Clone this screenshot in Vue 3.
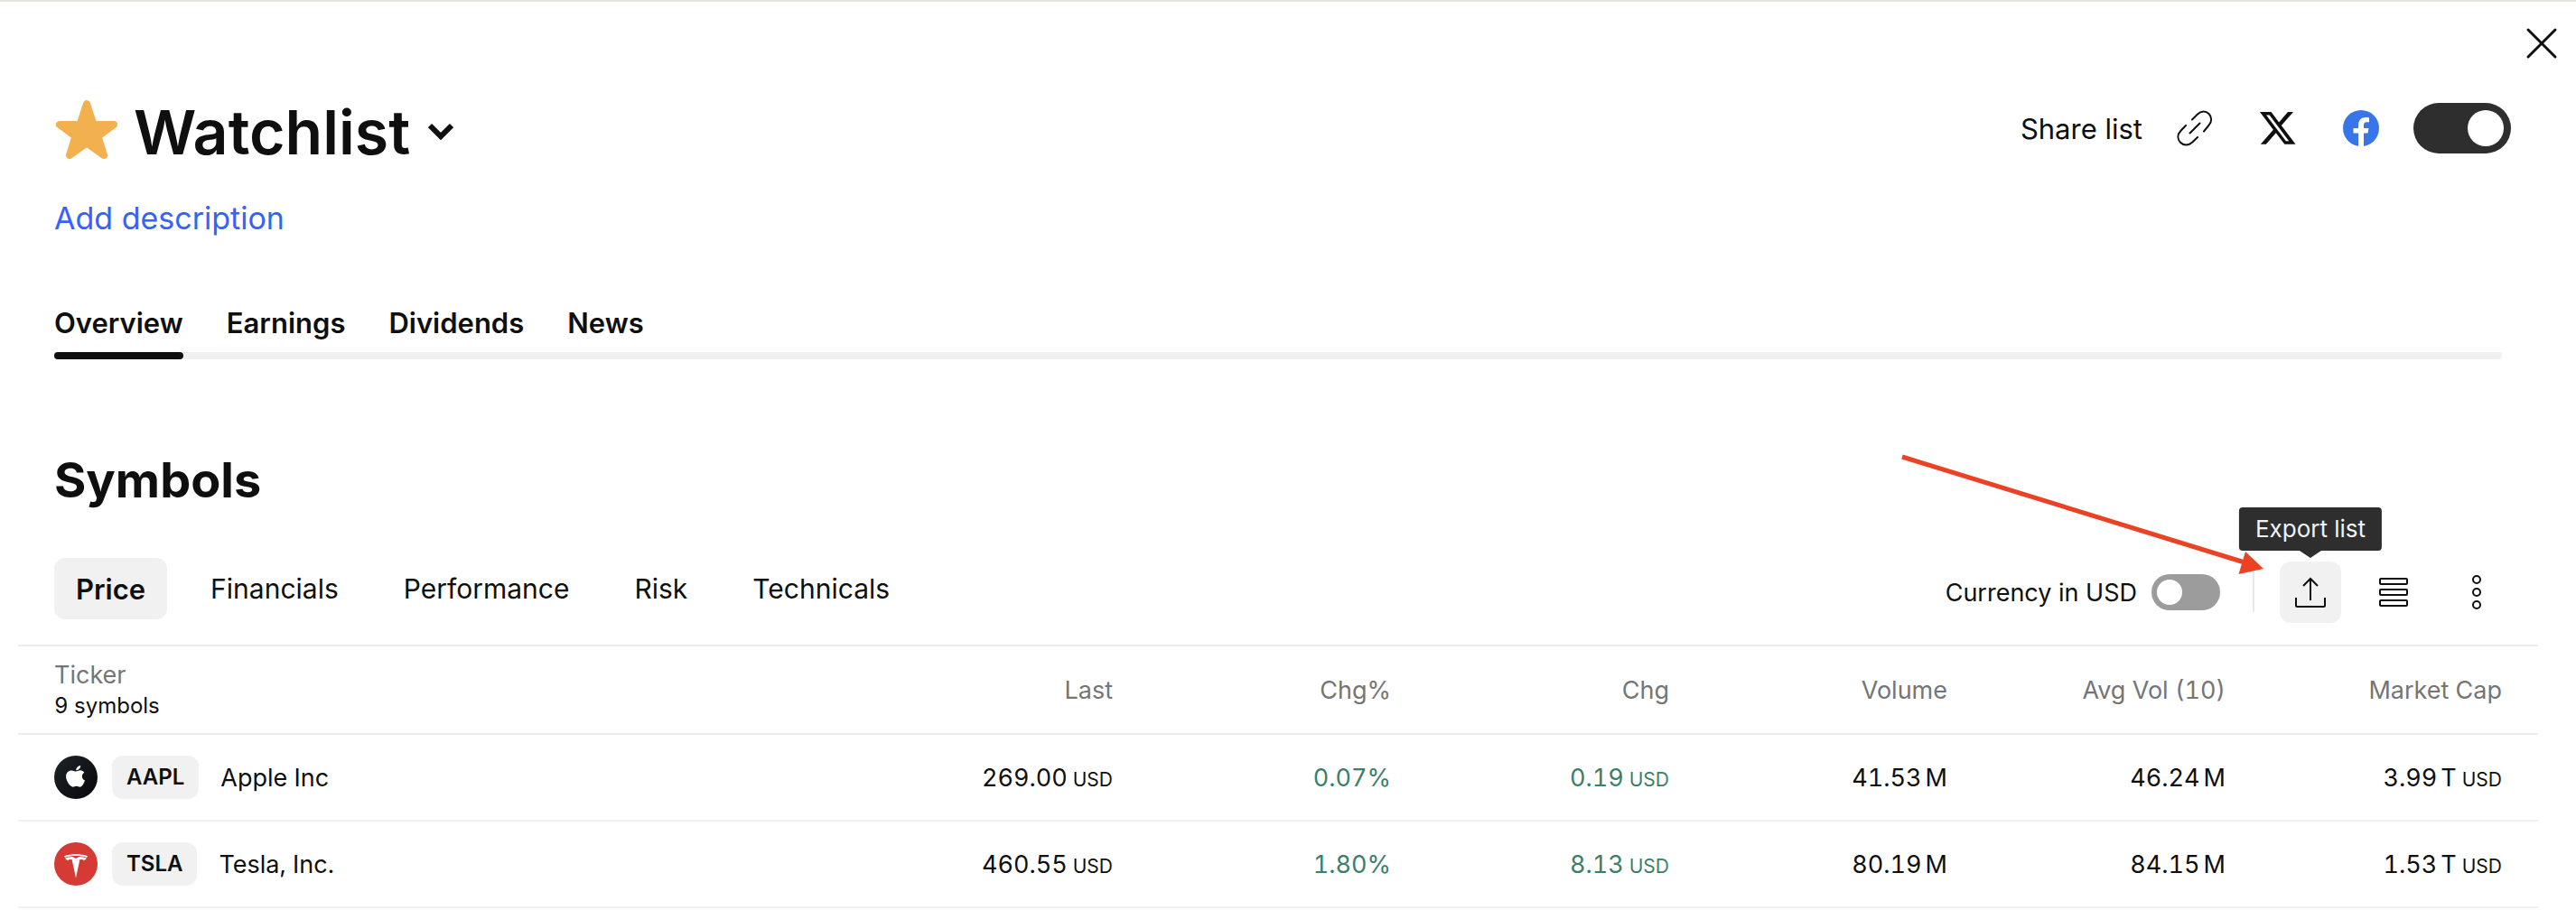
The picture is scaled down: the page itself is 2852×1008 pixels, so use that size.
<script setup>
import { ref } from 'vue'

const shared = ref(true)
const inUsd = ref(false)
const activeTab = ref('Overview')
const activeView = ref('Price')

const tabs = ['Overview', 'Earnings', 'Dividends', 'News']
const views = ['Price', 'Financials', 'Performance', 'Risk', 'Technicals']
const columns = ['Last', 'Chg%', 'Chg', 'Volume', 'Avg Vol (10)', 'Market Cap']
const rows = [
  {
    ticker: 'AAPL',
    name: 'Apple Inc',
    cells: [
      { value: '269.00', currency: true },
      { value: '0.07%', up: true },
      { value: '0.19', currency: true, up: true },
      { value: '41.53', unit: 'M' },
      { value: '46.24', unit: 'M' },
      { value: '3.99', unit: 'T', currency: true },
    ],
  },
  {
    ticker: 'TSLA',
    name: 'Tesla, Inc.',
    cells: [
      { value: '460.55', currency: true },
      { value: '1.80%', up: true },
      { value: '8.13', currency: true, up: true },
      { value: '80.19', unit: 'M' },
      { value: '84.15', unit: 'M' },
      { value: '1.53', unit: 'T', currency: true },
    ],
  },
]
</script>

<template>
  <div class="page">
    <div class="topbar">
      <button class="icon-btn" type="button" aria-label="Close">
        <svg width="48" height="48" viewBox="0 0 48 48"><path d="M9 9l30 30M39 9L9 39" fill="none" stroke="#0f0f0f" stroke-width="3" stroke-linecap="round" /></svg>
      </button>
    </div>

    <header class="header">
      <div class="heading">
        <svg width="72" height="72" viewBox="-2 0 72 72" aria-hidden="true">
          <path d="M34 5L41.500 28H64L46.500 41L53 62L34 48.500L15 62L21.500 41L4 28H26.500Z" fill="#f3b04f" stroke="#f3b04f" stroke-width="8" stroke-linejoin="round" />
        </svg>
        <h1>Watchlist</h1>
        <button class="icon-btn chevron" type="button" aria-label="Choose list">
          <svg width="28" height="20" viewBox="0 0 28 20"><path d="M2 3l12 12L26 3" fill="none" stroke="#0f0f0f" stroke-width="6" /></svg>
        </button>
      </div>
      <div class="share">
        <label for="share">Share list</label>
        <button class="icon-btn link" type="button" aria-label="Copy link">
          <svg width="40" height="40" viewBox="0 0 40 40"><path d="M17 10.500l6-6C27 .500 32 .500 35.500 4s3.700 9-.200 13L30 23.500M10 17l-5.500 5.800C.500 27 .500 32 4 35.800s9.500 3.400 13.300-.300L23 30M14.500 25.500L25.500 14.500" fill="none" stroke="#0f0f0f" stroke-width="2" stroke-linecap="round" /></svg>
        </button>
        <button class="icon-btn" type="button" aria-label="Share on X">
          <svg width="40" height="40" viewBox="0 0 24 24"><path fill="#0f0f0f" d="M18.600 1.200h3.600l-7.900 9L23.700 22.700h-7.300l-5.700-7.500-6.600 7.500H.500l8.400-9.600L0 1.200h7.500l5.200 6.900zm-1.300 19.300h2L6.400 3.300H4.200z" /></svg>
        </button>
        <button class="icon-btn" type="button" aria-label="Share on Facebook">
          <svg width="40" height="40" viewBox="0 0 40 40"><circle cx="20" cy="20" r="20" fill="#3975ea" /><path d="M17 40V25.500h-5.500V20H17v-2.500C17 11 20 8 25.500 8c1.500 0 2.500.100 3.500.400v4.800h-2.700C23.700 13.200 23 14.500 23 17v3h5.500l-1 5.500H23V40z" fill="#fff" /></svg>
        </button>
        <input id="share" v-model="shared" class="switch large" type="checkbox" role="switch" />
      </div>
    </header>

    <main class="content">
      <button class="describe" type="button">Add description</button>

      <nav class="tabs">
        <a v-for="tab in tabs" :key="tab" href="#" :class="{ active: tab === activeTab }" @click.prevent="activeTab = tab">{{ tab }}</a>
      </nav>

      <h2>Symbols</h2>

      <div class="bar">
        <div class="views">
          <button v-for="view in views" :key="view" type="button" :class="{ active: view === activeView }" @click="activeView = view">{{ view }}</button>
        </div>
        <div class="tools">
          <label for="usd">Currency in USD</label>
          <input id="usd" v-model="inUsd" class="switch" type="checkbox" role="switch" />
          <span class="divider"></span>
          <button class="tool hovered" type="button" aria-labelledby="export-tip">
            <svg width="36" height="36" viewBox="0 0 36 36"><path d="M2 24v8.500q0 1.500 1.500 1.500h29q1.500 0 1.500-1.500V24M18 27V3M10 11l8-8 8 8" fill="none" stroke="#0f0f0f" stroke-width="2" /></svg>
            <span id="export-tip" class="tooltip" role="tooltip">Export list</span>
            <svg class="arrow" width="404" height="136" viewBox="0 0 404 136" aria-hidden="true"><path d="M3 6L382 123" stroke="#eb4225" stroke-width="5" /><path d="M403 130L383 111L375.500 136Z" fill="#eb4225" /></svg>
          </button>
          <button class="tool" type="button" aria-label="Row density">
            <svg width="32" height="32" viewBox="0 0 32 32" fill="none" stroke="#0f0f0f" stroke-width="2"><rect x="1" y="1" width="30" height="6" rx="1" /><rect x="1" y="13" width="30" height="6" rx="1" /><rect x="1" y="25" width="30" height="6" rx="1" /></svg>
          </button>
          <button class="tool" type="button" aria-label="More">
            <svg width="10" height="38" viewBox="0 0 10 38" fill="none" stroke="#0f0f0f" stroke-width="2"><circle cx="5" cy="5" r="4" /><circle cx="5" cy="19" r="4" /><circle cx="5" cy="33" r="4" /></svg>
          </button>
        </div>
      </div>
    </main>

    <table>
      <thead>
        <tr>
          <th class="first" scope="col">Ticker<small>9 symbols</small></th>
          <th v-for="column in columns" :key="column" scope="col">{{ column }}</th>
        </tr>
      </thead>
      <tbody>
        <tr v-for="row in rows" :key="row.ticker">
          <td class="first">
            <div class="symbol">
              <svg v-if="row.ticker === 'AAPL'" width="48" height="48" viewBox="0 0 48 48" aria-hidden="true">
                <defs><linearGradient id="apple" x1="0" y1="0" x2="1" y2="1"><stop offset="0" stop-color="#1e2427" /><stop offset="1" stop-color="#08070c" /></linearGradient></defs>
                <circle cx="24" cy="24" r="24" fill="url(#apple)" />
                <path fill="#fff" d="M29.200 11c.200 2.600-2.100 5.200-4.900 5.200-.300-2.500 2.200-5 4.900-5.200zM33.300 18.700c-3.500 2.200-3.100 7 .700 8.700-.900 2.600-3 7.200-5.500 7.300-1.500 0-2.100-.900-3.900-.900s-2.400.900-3.800.900c-3.200 0-7.700-6.600-7.700-11.600 0-4.300 2.800-6.700 6-6.700 2 0 3.600 1.200 4.800 1.200 1.100 0 2.900-1.300 5.200-1.300 1.500 0 3.200.900 4.200 2.400z" />
              </svg>
              <svg v-else width="48" height="48" viewBox="0 0 48 48" aria-hidden="true">
                <circle cx="24" cy="24" r="24" fill="#d63a34" />
                <path fill="#fff" d="M11 15.300c8-2.600 18-2.600 26 0l-.700 1.400c-7.500-2.400-17.100-2.400-24.600 0zM12.200 17.600c2.500-.900 5.300-1.400 8-1.500L24 18l3.800-1.900c2.700.100 5.500.600 8 1.500-.600 1.500-1.700 2.400-3.200 2.700-.200-1-1.400-1.400-4.200-1.300L24 39.500 19.600 19c-2.800-.100-4 .300-4.200 1.300-1.500-.300-2.600-1.200-3.200-2.700z" />
              </svg>
              <a href="#" class="badge">{{ row.ticker }}</a>
              <span>{{ row.name }}</span>
            </div>
          </td>
          <td v-for="(cell, i) in row.cells" :key="i" :class="{ up: cell.up }">
            {{ cell.value }}<span v-if="cell.unit" class="unit">{{ cell.unit }}</span><span v-if="cell.currency" class="currency">USD</span>
          </td>
        </tr>
      </tbody>
    </table>
  </div>
</template>

<style>
body {
  margin: 0;
  background: #fff;
}
</style>

<style scoped>
.page {
  border-top: 2px solid #e3e3de;
  color: #0f0f0f;
  font-family: Inter, "Liberation Sans", sans-serif;
  font-size: 27px;
}

button {
  padding: 0;
  border: 0;
  background: none;
  color: inherit;
  font: inherit;
  cursor: pointer;
}

svg {
  display: block;
  flex: none;
}

a {
  color: inherit;
  text-decoration: none;
}

.topbar {
  display: flex;
  justify-content: flex-end;
  padding: 22px 14px 30px;
}

.header {
  display: flex;
  justify-content: space-between;
  align-items: flex-start;
  padding: 0 72px 0 60px;
}

.heading {
  display: flex;
  align-items: center;
}

h1 {
  margin: 0 20px 0 16px;
  font-size: 68px;
  line-height: 88px;
  font-weight: 600;
}

.share {
  display: flex;
  align-items: center;
  gap: 52px;
  padding-top: 12px;
  font-size: 31px;
}

.share .link {
  margin-left: -14px;
}

.share .switch {
  margin-left: -14px;
}

.switch {
  flex: none;
  box-sizing: border-box;
  width: 76px;
  height: 40px;
  margin: 0;
  padding: 6px;
  appearance: none;
  border-radius: 28px;
  background: #9c9c9c;
  display: flex;
}

.switch::before {
  content: "";
  width: 28px;
  height: 28px;
  border-radius: 50%;
  background: #fff;
}

.switch:checked {
  justify-content: flex-end;
  background: #2e2e2e;
}

.switch.large {
  width: 108px;
  height: 56px;
  padding: 8px;
}

.switch.large::before {
  width: 40px;
  height: 40px;
}

.content {
  padding: 30px 82px 24px 60px;
}

.describe {
  display: block;
  color: #3861fb;
  font-size: 34px;
  line-height: 44px;
}

.tabs {
  display: flex;
  gap: 48px;
  margin-top: 74px;
  border-radius: 4px;
  background: linear-gradient(#f1f1f1, #f1f1f1) bottom / 100% 8px no-repeat;
  font-size: 31px;
  line-height: 40px;
  font-weight: 600;
}

.tabs a {
  padding-bottom: 20px;
}

.tabs .active {
  position: relative;
}

.tabs .active::after {
  content: "";
  position: absolute;
  inset: auto 0 0;
  height: 8px;
  border-radius: 4px;
  background: #0f0f0f;
}

h2 {
  margin: 102px 0 54px;
  font-size: 54px;
  line-height: 64px;
  font-weight: 700;
}

.bar {
  display: flex;
  justify-content: space-between;
  align-items: flex-start;
}

.views {
  display: flex;
  gap: 24px;
  font-size: 30px;
}

.views button {
  height: 68px;
  padding: 0 24px;
  border-radius: 12px;
}

.views .active {
  background: #f1f1f1;
  font-size: 31px;
  font-weight: 600;
}

.tools {
  display: flex;
  align-items: center;
  padding-top: 4px;
}

.tools .switch {
  margin: 0 36px 0 16px;
}

.divider {
  width: 2px;
  height: 44px;
  margin-right: 28px;
  background: #e8e8e8;
}

.tool {
  position: relative;
  display: flex;
  align-items: center;
  justify-content: center;
  width: 68px;
  height: 68px;
  margin-right: 24px;
  border-radius: 12px;
}

.tool:last-child {
  margin-right: -6px;
}

.tool.hovered {
  background: #f1f1f1;
}

.tooltip {
  position: absolute;
  bottom: 80px;
  left: 50%;
  transform: translateX(-50%);
  padding: 0 18px;
  border-radius: 4px;
  background: #2e2e2e;
  color: #f2f2f2;
  font-size: 26px;
  line-height: 48px;
  white-space: nowrap;
}

.tooltip::after {
  content: "";
  position: absolute;
  top: 100%;
  left: 50%;
  margin-left: -12px;
  border: 12px solid transparent;
  border-top: 8px solid #2e2e2e;
  border-bottom: 0;
}

.arrow {
  position: absolute;
  right: 85px;
  bottom: 54px;
  pointer-events: none;
}

table {
  width: calc(100% - 62px);
  margin-left: 20px;
  table-layout: fixed;
  border-collapse: collapse;
  font-variant-numeric: tabular-nums;
}

th,
td {
  box-sizing: border-box;
  width: 308px;
  padding: 0 40px 0 0;
  text-align: right;
  white-space: nowrap;
}

th:last-child {
  width: 306px;
}

th {
  height: 98px;
  border-top: 2px solid #ebebeb;
  border-bottom: 2px solid #ebebeb;
  color: #757575;
  font-weight: 400;
}

td {
  height: 96px;
  border-bottom: 2px solid #f1f1f1;
}

.first {
  width: auto;
  padding-left: 40px;
  text-align: left;
}

th.first {
  line-height: 36px;
}

small {
  display: block;
  color: #0f0f0f;
  font-size: 24px;
  line-height: 32px;
}

.symbol {
  display: flex;
  align-items: center;
  gap: 16px;
}

.badge {
  margin-right: 8px;
  padding: 0 16px;
  border-radius: 12px;
  background: #f1f1f1;
  font-size: 24px;
  line-height: 48px;
  font-weight: 600;
}

.up {
  color: #3a8069;
}

.unit {
  margin-left: 4px;
}

.currency {
  margin-left: 6px;
  font-size: 21px;
}
</style>
